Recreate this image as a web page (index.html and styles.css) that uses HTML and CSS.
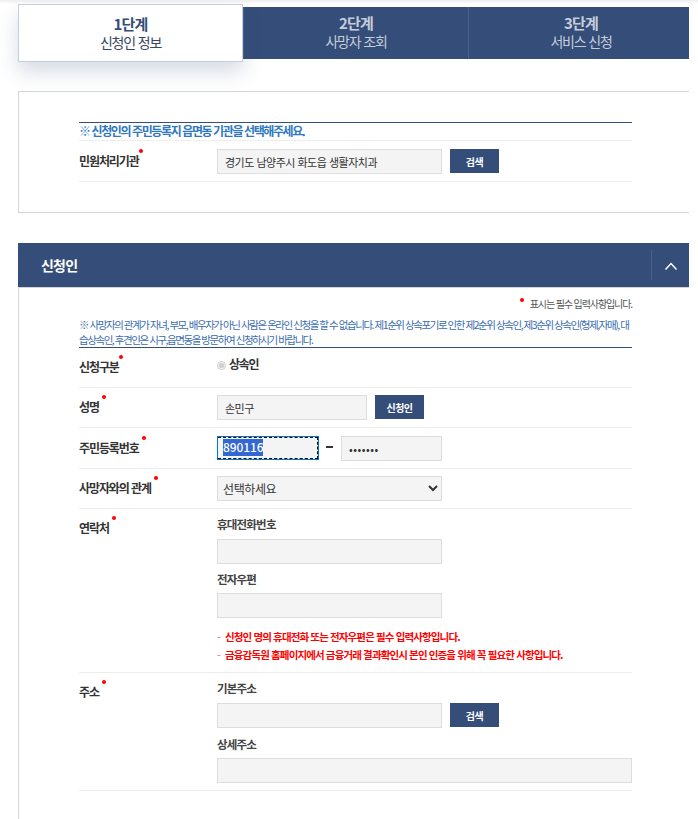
FILE: index.html
```html
<!DOCTYPE html>
<html lang="ko">
<head>
	<meta charset="UTF-8">
	<title>온라인 신청</title>
	<link rel="stylesheet" href="styles.css">
</head>
<body>
	<div class="container">
		<!-- 단계 탭 -->
		<ul class="steps">
			<li class="step on"><strong>1단계</strong><span>신청인 정보</span></li>
			<li class="step"><strong>2단계</strong><span>사망자 조회</span></li>
			<li class="step"><strong>3단계</strong><span>서비스 신청</span></li>
		</ul>

		<!-- 민원처리기관 -->
		<div class="box">
			<p class="notice-top">※ 신청인의 주민등록지 읍면동 기관을 선택해주세요.</p>
			<div class="row org-row">
				<div class="label"><span class="req near">민원처리기관</span></div>
				<div class="field inline">
					<input type="text" class="inp w225" value="경기도 남양주시 화도읍 생활자치과">
					<button class="btn">검색</button>
				</div>
			</div>
		</div>

		<!-- 신청인 -->
		<div class="section-head">
			<h2>신청인</h2>
			<button class="toggle" aria-label="접기">
				<svg width="14" height="8" viewBox="0 0 14 8"><path d="M1.5 7.5 7 1.5l5.5 6" fill="none" stroke="#fff" stroke-width="1.5"/></svg>
			</button>
		</div>
		<div class="section-body">
			<p class="req-guide"><span class="dot"></span>표시는 필수 입력사항입니다.</p>
			<p class="notice">※ 사망자의 관계가 자녀, 부모, 배우자가 아닌 사람은 온라인 신청을 할 수 없습니다. 제1순위 상속포기로 인한 제2순위 상속인, 제3순위 상속인(형제,자매), 대습상속인, 후견인은 시구,읍면동을 방문하여 신청하시기 바랍니다.</p>
			<div class="form">
				<div class="row row-type">
					<div class="label"><span class="req near">신청구분</span></div>
					<div class="field">
						<label class="radio"><input type="radio" checked disabled>상속인</label>
					</div>
				</div>
				<div class="row">
					<div class="label"><span class="req">성명</span></div>
					<div class="field inline">
						<input type="text" class="inp w150" value="손민구">
						<button class="btn">신청인</button>
					</div>
				</div>
				<div class="row row-id">
					<div class="label"><span class="req">주민등록번호</span></div>
					<div class="field inline">
						<div class="inp w102 focused"><span class="selected">890116</span></div>
						<span class="dash"></span>
						<input type="password" class="inp w101" value="1234567">
					</div>
				</div>
				<div class="row">
					<div class="label"><span class="req">사망자와의 관계</span></div>
					<div class="field">
						<select class="inp w225 sel"><option>선택하세요</option></select>
					</div>
				</div>
				<div class="row row-contact">
					<div class="label"><span class="req">연락처</span></div>
					<div class="field">
						<p class="sub">휴대전화번호</p>
						<input type="text" class="inp w225">
						<p class="sub sub-next">전자우편</p>
						<input type="text" class="inp w225">
						<ul class="warn">
							<li>신청인 명의 휴대전화 또는 전자우편은 필수 입력사항입니다.</li>
							<li>금융감독원 홈페이지에서 금융거래 결과확인시 본인 인증을 위해 꼭 필요한 사항입니다.</li>
						</ul>
					</div>
				</div>
				<div class="row row-addr">
					<div class="label"><span class="req">주소</span></div>
					<div class="field">
						<p class="sub">기본주소</p>
						<div class="inline">
							<input type="text" class="inp w225">
							<button class="btn">검색</button>
						</div>
						<p class="sub sub-next">상세주소</p>
						<input type="text" class="inp full">
					</div>
				</div>
			</div>
		</div>
	</div>
</body>
</html>
```

FILE: styles.css
```css
html, body { margin: 0; padding: 0; overflow-x: hidden; }
body { background: linear-gradient(#eee, #fff 4px) no-repeat; font-family: "Noto Sans CJK KR", "Noto Sans", sans-serif; font-size: 12px; color: #333; letter-spacing: -0.6px; }
p, ul, h2 { margin: 0; padding: 0; }
ul { list-style: none; }
.container { width: 689px; box-sizing: border-box; padding: 4px 0 0 18px; overflow: hidden; }

/* steps */
.steps { display: flex; height: 58px; }
.step { flex: 0 0 225px; height: 52px; margin-top: 3px; padding-bottom: 2px; background-color: #344d79; color: #c6cdd9; text-align: center; box-sizing: border-box; border-left: 1px solid #4a6290; display: flex; flex-direction: column; justify-content: center; }
.step strong { font-size: 15px; line-height: 19px; letter-spacing: -0.8px; }
.step span { font-size: 14px; line-height: 19px; letter-spacing: -1.2px; }
.step.on { height: 58px; margin-top: 0; padding-bottom: 0; background-color: #fff; color: #3a4560; border: 1px solid #c5cede; box-shadow: 0 10px 20px rgba(52,77,121,0.2); position: relative; }
.step.on strong { color: #344d79; }

/* top box */
.box { margin-top: 29px; height: 122px; box-sizing: border-box; border: 1px solid #d5d5d5; border-right: none; padding: 30px 57px 0 60px; }
.notice-top { border-top: 1px solid #344d79; border-bottom: 1px solid #eee; color: #2f78c0; font-size: 12px; font-weight: 700; line-height: 15px; height: 19px; box-sizing: border-box; letter-spacing: -1.4px; }
.box .org-row { height: 41px; padding-top: 8px; }

/* section */
.section-head { margin-top: 30px; height: 45px; box-sizing: border-box; background-color: #344d79; border-bottom: 1px solid #d5d5d5; display: flex; align-items: center; justify-content: space-between; }
.section-head h2 { margin-left: 23px; font-size: 14px; color: #fff; font-weight: 700; letter-spacing: -0.8px; }
.toggle { width: 38px; height: 30px; background: none; border: none; border-left: 1px solid #4a6290; padding: 0; }
.section-body { border-left: 1px solid #d5d5d5; padding: 0 57px 40px 60px; }
.req-guide { text-align: right; font-size: 10px; line-height: 14px; padding-top: 9px; color: #555; letter-spacing: -1.1px; }
.dot { display: inline-block; width: 4px; height: 4px; border-radius: 50%; background-color: #f00; margin-right: 6px; vertical-align: 6px; }
.notice { margin-top: 6px; color: #3a6cb0; font-size: 10.5px; line-height: 15px; letter-spacing: -1.45px; }

/* form rows */
.form { border-top: 1px solid #344d79; }
.row { display: flex; border-bottom: 1px solid #eee; padding: 7px 0 0; box-sizing: border-box; height: 40px; }
.row-id { height: 41px; padding-top: 8px; }
.label { width: 138px; flex-shrink: 0; font-weight: 700; color: #333; font-size: 12px; line-height: 24px; letter-spacing: -1.1px; }
.req { position: relative; }
.req::after { content: ""; position: absolute; top: -3px; right: -7px; width: 4px; height: 4px; border-radius: 50%; background-color: #f00; }
.req.near::after { right: -4px; }
.field { flex-grow: 1; }
.inline { display: flex; align-items: flex-start; }
.inp { display: block; box-sizing: border-box; height: 25px; padding: 0 7px; border: 1px solid #ddd; background-color: #f4f4f4; color: #333; font-family: inherit; font-size: 11px; letter-spacing: -0.5px; border-radius: 0; outline: none; }
.w225 { width: 225px; }
.w150 { width: 150px; }
.w102 { width: 102px; }
.w101 { width: 101px; letter-spacing: 0.5px; }
.full { width: 100%; }
.sel { padding-left: 1px; font-size: 12px; letter-spacing: -0.4px; }
.btn { flex: 0 0 49px; height: 24px; margin-left: 8px; background-color: #344d79; border: none; color: #fff; font-family: inherit; font-size: 10px; font-weight: 700; letter-spacing: -0.5px; padding: 0; }
.focused { border: 1px solid #0078c8; position: relative; height: 24px; padding: 2px 0 0 5px; line-height: 16px; }
.focused::after { content: ""; position: absolute; inset: 0 0 0 0; border: 1px dashed #000; border-left: none; }
.selected { background-color: #3367d1; color: #fff; display: inline-block; height: 17px; font-size: 12px; font-weight: 500; letter-spacing: -0.1px; }
.dash { flex: 0 0 7px; height: 2px; margin: 10px 8px 0 7px; background-color: #333; }
.radio { display: flex; align-items: center; font-weight: 700; font-size: 12px; line-height: 16px; letter-spacing: -1.3px; margin-top: 1px; }
.radio input { margin: 2px 3px 0 0; width: 9px; height: 9px; }
.row-contact { height: 164px; }
.sub { font-weight: 700; font-size: 11.5px; line-height: 17px; margin-bottom: 6px; letter-spacing: -0.8px; color: #444; }
.sub.sub-next { margin-top: 7px; margin-bottom: 5px; }
.warn { margin-top: 10px; color: #f00; font-size: 10.5px; font-weight: 700; line-height: 18px; letter-spacing: -0.87px; }
.warn li::before { content: "-"; color: #f08a8a; margin-right: 5px; }
.row-addr { height: 118px; }
.row-addr .sub.sub-next { margin-top: 8px; margin-bottom: 5px; }
```
